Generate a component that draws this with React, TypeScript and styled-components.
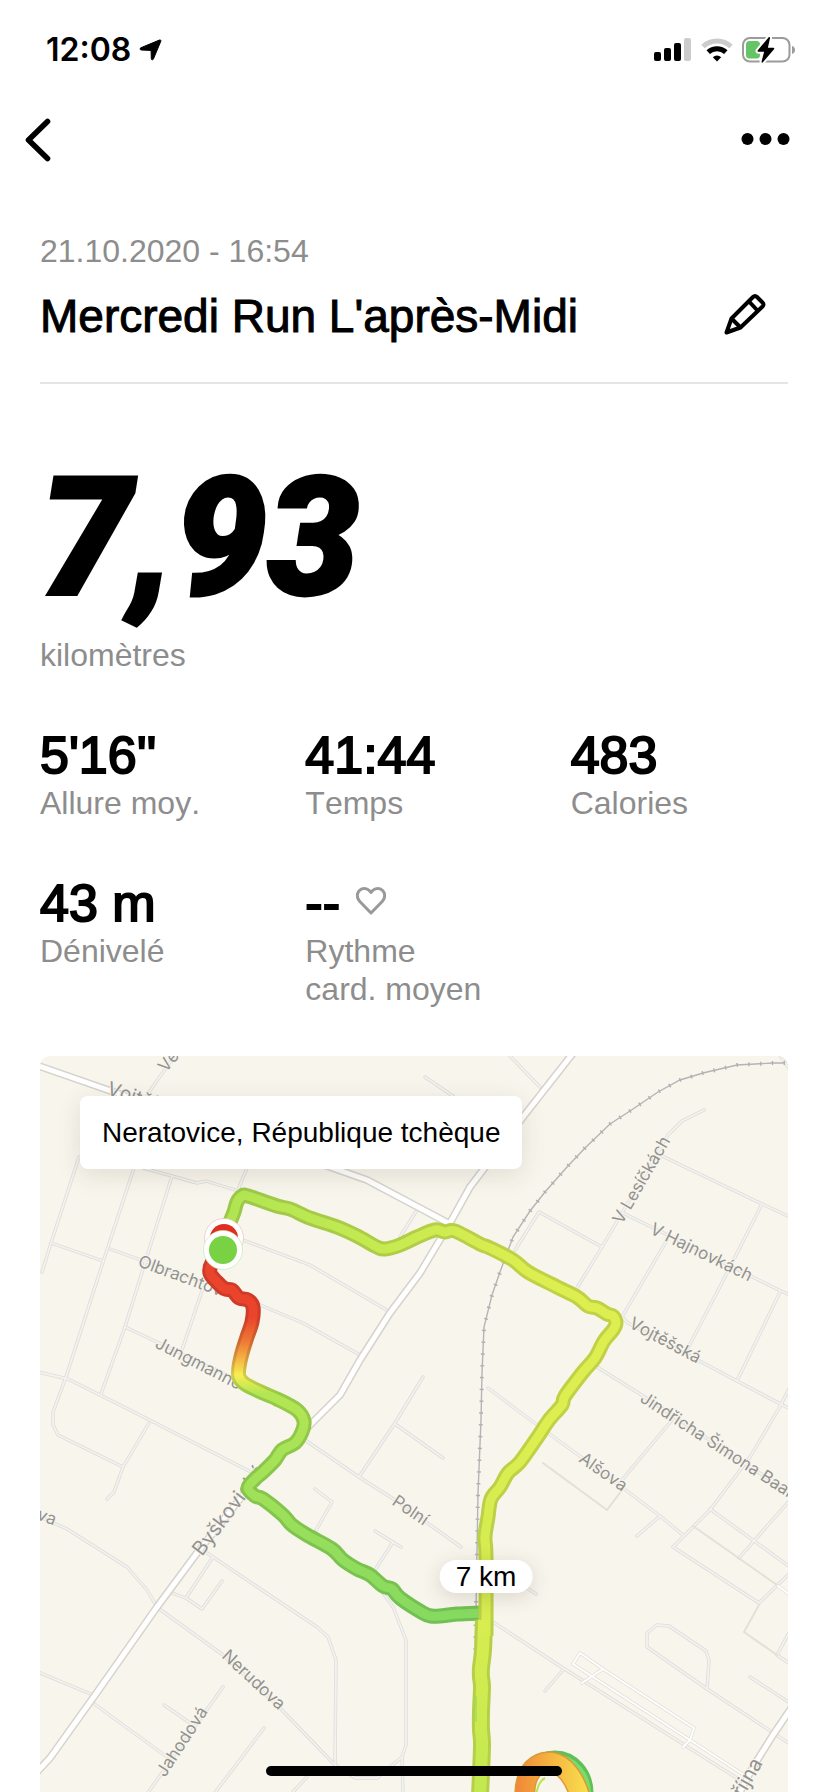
import React from "react";
import styled, { createGlobalStyle } from "styled-components";

const GlobalStyle = createGlobalStyle`
  * { box-sizing: border-box; }
  body { margin: 0; background: #fff; color: #000; font-family: "Liberation Sans", Arial, sans-serif; font-kerning: none; }
  h1, p, dl, dt, dd { margin: 0; font-weight: 400; }
`;

const muted = "#8d8d8d";

const Screen = styled.div`
  display: flex;
  flex-direction: column;
  min-height: 100vh;
`;

const StatusBar = styled.header`
  display: flex;
  align-items: center;
  justify-content: space-between;
  height: 100px;
  padding: 0 32px 0 46px;
`;

const Cluster = styled.div<{ $gap: number }>`
  display: flex;
  align-items: center;
  gap: ${(p) => p.$gap}px;
`;

const Clock = styled.time`
  font: 600 32px/40px Inter, sans-serif;
`;

const NavBar = styled.nav`
  display: flex;
  align-items: center;
  justify-content: space-between;
  height: 80px;
  padding: 0 38px 0 20px;
`;

const IconButton = styled.button`
  display: flex;
  padding: 0;
  border: 0;
  background: none;
  color: inherit;
  cursor: pointer;
`;

const Content = styled.main`
  display: flex;
  flex: 1;
  flex-direction: column;
  padding: 52px 40px 0;
`;

const RunHeader = styled.div`
  display: flex;
  flex-direction: column;
  gap: 20px;
  padding-bottom: 40px;
  border-bottom: 2px solid #e5e5e5;
`;

const Caption = styled.p`
  color: ${muted};
  font-size: 32px;
  line-height: 38px;
`;

const TitleRow = styled.div`
  display: flex;
  align-items: center;
  justify-content: space-between;
  padding-right: 22px;
`;

const Title = styled.h1`
  font-size: 46px;
  line-height: 52px;
  -webkit-text-stroke: 1px #000;
`;

const Distance = styled.section`
  display: flex;
  flex-direction: column;
  gap: 18px;
  padding: 74px 0 52px;
`;

const DistanceValue = styled.p`
  font: italic 900 164px/160px Roboto, sans-serif;
  -webkit-text-stroke: 3px #000;
`;

const Stats = styled.dl`
  display: grid;
  grid-template-columns: repeat(3, 1fr);
  gap: 52px 48px;
`;

const Stat = styled.div`
  display: flex;
  flex-direction: column-reverse;
  justify-content: flex-end;
`;

const StatLabel = styled.dt`
  color: ${muted};
  font-size: 32px;
  line-height: 38px;
`;

const StatValue = styled.dd`
  display: flex;
  align-items: center;
  gap: 16px;
  font-size: 52px;
  line-height: 58px;
  -webkit-text-stroke: 2px #000;
`;

const MapCard = styled.section`
  position: relative;
  flex: 1;
  min-height: 736px;
  margin-top: 48px;
  overflow: hidden;
  border-radius: 10px 10px 0 0;
  background: #f8f5ed;
`;

const MapDrawing = styled.svg`
  position: absolute;
  inset: 0;
  width: 100%;
  height: 100%;
  font-family: Inter, sans-serif;
`;

const PlaceTag = styled.div`
  position: absolute;
  top: 40px;
  left: 40px;
  padding: 18px 22px;
  border-radius: 8px;
  background: #fff;
  box-shadow: 0 6px 24px rgba(60, 50, 20, 0.12);
  font-size: 28px;
  line-height: 37px;
`;

const DistancePin = styled.div`
  position: absolute;
  top: 504px;
  left: 446px;
  transform: translateX(-50%);
  padding: 0 16px;
  border-radius: 17px;
  background: #fff;
  box-shadow: 0 4px 20px rgba(60, 50, 20, 0.16);
  font-size: 28px;
  line-height: 33px;
  white-space: nowrap;
`;

const HomeIndicator = styled.div`
  position: fixed;
  bottom: 16px;
  left: 50%;
  width: 296px;
  height: 10px;
  transform: translateX(-50%);
  border-radius: 5px;
  background: #000;
`;

type Point = [number, number];

const mainRoads = [
  "M-4 9 L68 34 L293 112 L327 124 L408 167",
  "M534 -4 L483 61 L443 114 L430 131 L410 167 L380 217 L350 257 L320 304 L300 339 L273 366 L207 434 L157 497 L117 551 L53 642 L10 702 L-4 717",
  "M752 651 L733 679 L713 711 L698 740",
];

const streets = [
  "M136 -2 L107 39",
  "M103 112 L132 120 L157 127 L166 125 L205 137",
  "M39 101 L11 187 L2 216",
  "M94 112 L63 206 L26 321 L13 356 L13 369 L18 379 L83 411",
  "M132 120 L85 271 L61 338",
  "M11 187 L63 205",
  "M70 193 L163 226",
  "M203 184 L270 209 L350 256",
  "M220 249 L263 267 L320 299",
  "M163 232 L142 294",
  "M85 271 L200 325",
  "M-2 316 L28 323 L90 354 L213 417",
  "M207 112 L197 136",
  "M377 154 L360 181",
  "M383 321 L355 367 L319 421",
  "M265 384 L319 421 L355 444 L421 491",
  "M355 368 L403 402",
  "M109 367 L83 411 L74 436 L67 443",
  "M275 433 L292 446 L275 476",
  "M335 475 L361 491",
  "M353 486 L335 514",
  "M-2 460 L27 473 L87 511 L107 534 L117 551",
  "M167 497 L277 571 L288 581 L296 604 L295 709",
  "M173 501 L146 542",
  "M132 537 L146 542 L162 553 L182 525",
  "M118 552 L183 599 L240 652 L295 709 L315 722 L337 722 L362 701 L366 689 L366 584 L353 551 L343 537",
  "M362 701 L363 738",
  "M-2 616 L53 639",
  "M53 647 L127 701",
  "M183 631 L107 738",
  "M124 649 L150 667",
  "M224 672 L174 738",
  "M267 721 L251 738",
  "M487 532 L496 538",
  "M468 -2 L500 31",
  "M385 21 L413 40",
  "M739 -2 L750 14",
  "M664 54 L642 65 L628 79 L582 157 L562 191 L537 232",
  "M620 99 L722 148 L750 161",
  "M583 157 L741 235 L750 239",
  "M475 194 L499 156 L562 191",
  "M627 184 L582 261 L588 267 L697 325 L750 353",
  "M722 148 L687 217 L648 292",
  "M740 236 L697 325",
  "M557 311 L600 338 L750 437",
  "M750 331 L738 354 L710 401 L670 454 L633 491 L719 547 L750 517",
  "M448 332 L477 354 L583 432 L620 460 L643 479",
  "M620 460 L597 480",
  "M632 364 L582 424",
  "M670 453 L750 511",
  "M750 444 L699 502",
  "M750 575 L737 599 L750 608",
  "M453 566 L523 612 L703 726",
  "M523 614 L505 635",
  "M750 688 L667 633 L669 604 L666 595 L629 570 L617 569 L607 577 L607 591 L667 633",
  "M710 621 L750 647",
];

const footpaths = [
  "M503 407 L567 454 L582 434",
  "M653 470 L737 529",
  "M719 549 L704 576 L737 599",
];

const serviceLanes = [
  "M533 608 L540 597 L563 613 L654 672 L650 684 L643 691",
  "M563 613 L542 627",
  "M533 608 L707 721",
  "M738 530 L750 539",
];

const railway =
  "M745 7 L733 7 L697 9 L663 17 L640 24 L618 36 L590 55 L570 68 L545 92 L527 111 L505 136 L490 155 L473 181 L460 216 L452 239 L444 271 L442 317 L441 364 L438 437 L436 554 L435 600";

const streetLabels: { name: string; x: number; y: number; angle: number; size?: number }[] = [
  { name: "Ve", x: 126, y: 17, angle: -50 },
  { name: "Vojtěšská", x: 66, y: 38, angle: 18, size: 19 },
  { name: "Olbrachtov", x: 97, y: 210, angle: 20 },
  { name: "Jungmanno", x: 114, y: 291, angle: 27 },
  { name: "V Lesíčkách", x: 582, y: 169, angle: -60 },
  { name: "V Hajnovkách", x: 609, y: 177, angle: 26 },
  { name: "Vojtěšská", x: 588, y: 271, angle: 28 },
  { name: "Jindřicha Šimona Baara", x: 599, y: 345, angle: 33 },
  { name: "Alšova", x: 538, y: 405, angle: 35 },
  { name: "Polní", x: 351, y: 448, angle: 34 },
  { name: "va", x: -4, y: 463, angle: 20 },
  { name: "Byškovická", x: 162, y: 501, angle: -53, size: 20 },
  { name: "Nerudova", x: 181, y: 601, angle: 43 },
  { name: "Jahodová", x: 125, y: 722, angle: -57 },
  { name: "října", x: 703, y: 742, angle: -60, size: 20 },
];

const routeStart: Point[] = [
  [185, 190], [172, 207], [170, 217], [177, 226], [185, 233], [192, 234], [199, 242], [208, 244], [213, 251],
  [212, 266], [207, 281], [202, 297], [199, 311], [199, 321], [205, 328], [223, 337], [237, 343], [257, 354],
  [264, 365], [262, 376], [255, 387], [242, 394], [235, 404], [223, 416], [215, 423], [208, 432], [215, 440],
  [223, 443], [243, 459], [252, 469], [267, 479], [292, 493], [303, 504], [317, 513], [330, 519], [343, 530],
  [352, 533], [360, 542], [383, 557], [391, 560], [400, 560], [417, 558], [441, 557],
];

const routeEnd: Point[] = [
  [190, 166], [194, 156], [197, 146], [202, 140], [208, 140], [237, 150], [250, 153], [270, 162], [297, 171],
  [317, 180], [337, 191], [345, 193], [360, 189], [377, 181], [395, 174], [405, 176], [415, 175], [440, 188],
  [450, 192], [473, 204], [488, 216], [517, 231], [537, 241], [548, 250], [557, 252], [567, 258], [573, 260],
  [576, 267], [573, 274], [564, 285], [555, 302], [543, 316], [525, 340], [522, 349], [509, 364], [497, 382],
  [480, 406], [468, 417], [460, 431], [451, 443], [448, 461], [445, 481], [446, 501], [446, 580],
];

const routeShared: Point[] = [
  [444, 564], [443, 594], [441, 612], [441, 621], [442, 631], [441, 656], [441, 674], [442, 690], [440, 740],
];

/* Catmull-Rom curve through the recorded positions */
function smoothPath(points: Point[]) {
  let d = `M${points[0][0]} ${points[0][1]}`;
  for (let i = 0; i < points.length - 1; i++) {
    const a = points[Math.max(i - 1, 0)];
    const b = points[i];
    const c = points[i + 1];
    const e = points[Math.min(i + 2, points.length - 1)];
    d += ` C${b[0] + (c[0] - a[0]) / 6} ${b[1] + (c[1] - a[1]) / 6} ${c[0] - (e[0] - b[0]) / 6} ${c[1] - (e[1] - b[1]) / 6} ${c[0]} ${c[1]}`;
  }
  return d;
}

const startPath = smoothPath(routeStart);
const endPath = smoothPath(routeEnd);
const sharedPath = smoothPath(routeShared);
const loopPath = "M485 744 C483 712 500 705 511 706 C525 708 536 724 541 744";

function RunMap() {
  return (
    <MapDrawing viewBox="0 0 748 736" preserveAspectRatio="xMinYMin slice" role="img" aria-label="Parcours de la course">
      <defs>
        <linearGradient id="start" gradientUnits="userSpaceOnUse" x1="0" y1="262" x2="0" y2="562">
          <stop offset="0" stopColor="#ea452c" />
          <stop offset="0.08" stopColor="#ee7b36" />
          <stop offset="0.14" stopColor="#f4b845" />
          <stop offset="0.19" stopColor="#f8ee52" />
          <stop offset="0.25" stopColor="#b4e653" />
          <stop offset="1" stopColor="#86da60" />
        </linearGradient>
        <linearGradient id="startEdge" gradientUnits="userSpaceOnUse" x1="0" y1="262" x2="0" y2="562">
          <stop offset="0" stopColor="#cf3b28" />
          <stop offset="0.08" stopColor="#d0692f" />
          <stop offset="0.14" stopColor="#d59d3c" />
          <stop offset="0.19" stopColor="#d3cd48" />
          <stop offset="0.25" stopColor="#97c947" />
          <stop offset="1" stopColor="#71c053" />
        </linearGradient>
        <linearGradient id="end" gradientUnits="userSpaceOnUse" x1="190" y1="0" x2="490" y2="0">
          <stop offset="0" stopColor="#b0e552" />
          <stop offset="1" stopColor="#dcee50" />
        </linearGradient>
        <linearGradient id="endEdge" gradientUnits="userSpaceOnUse" x1="190" y1="0" x2="490" y2="0">
          <stop offset="0" stopColor="#9bc848" />
          <stop offset="1" stopColor="#c0d146" />
        </linearGradient>
        <linearGradient id="shared" gradientUnits="userSpaceOnUse" x1="0" y1="564" x2="0" y2="736">
          <stop offset="0" stopColor="#d8ed50" />
          <stop offset="1" stopColor="#c2e951" />
        </linearGradient>
        <linearGradient id="loop" gradientUnits="userSpaceOnUse" x1="478" y1="0" x2="546" y2="0">
          <stop offset="0" stopColor="#f08a38" />
          <stop offset="0.5" stopColor="#f5b640" />
          <stop offset="1" stopColor="#f8dc4e" />
        </linearGradient>
      </defs>

      <g fill="none" strokeLinejoin="round" strokeLinecap="round">
        <g stroke="#dcdcda" strokeWidth="3.4">{streets.map((d) => <path key={d} d={d} />)}</g>
        <g stroke="#f3f2ee" strokeWidth="1.8">{streets.map((d) => <path key={d} d={d} />)}</g>
        <g stroke="#e3e1d5" strokeWidth="2">{footpaths.map((d) => <path key={d} d={d} />)}</g>
        <g stroke="#e2e0da" strokeWidth="3.4">{serviceLanes.map((d) => <path key={d} d={d} />)}</g>
        <g stroke="#fff" strokeWidth="2">{serviceLanes.map((d) => <path key={d} d={d} />)}</g>
        <g stroke="#d6d3cc" strokeWidth="8">{mainRoads.map((d) => <path key={d} d={d} />)}</g>
        <g stroke="#fff" strokeWidth="5">{mainRoads.map((d) => <path key={d} d={d} />)}</g>
      </g>
      <path d={railway} fill="none" stroke="#b4b4b4" strokeWidth="1.4" />
      <path d={railway} fill="none" stroke="#b0b0b2" strokeWidth="4" strokeDasharray="1.4 10.4" />

      <g fill="#92928f" stroke="#f8f5ed" strokeWidth="2" paintOrder="stroke">
        {streetLabels.map((l) => (
          <text key={`${l.name}${l.x}`} fontSize={l.size ?? 17} transform={`translate(${l.x} ${l.y}) rotate(${l.angle})`}>
            {l.name}
          </text>
        ))}
      </g>

      <g fill="none" strokeLinejoin="round">
        <path d={startPath} stroke="url(#startEdge)" strokeWidth="15" />
        <path d={startPath} stroke="url(#start)" strokeWidth="9" />
        <path d={endPath} stroke="url(#endEdge)" strokeWidth="15" />
        <path d={sharedPath} stroke="#b6cf49" strokeWidth="18" />
        <path d={endPath} stroke="url(#end)" strokeWidth="9" />
        <path d={sharedPath} stroke="url(#shared)" strokeWidth="12" />
        <path d="M436 640 L436 666" stroke="#8bd95b" />
      </g>

      <g fill="none">
        <ellipse cx="515" cy="737" rx="31" ry="35" stroke="#5fbf58" strokeWidth="15" />
        <ellipse cx="514" cy="738" rx="31" ry="34" stroke="#7cdc69" strokeWidth="12" />
        <path d={loopPath} stroke="#dc9838" strokeWidth="21" />
        <path d={loopPath} stroke="url(#loop)" strokeWidth="18" />
        <path d="M496 742 Q497 726 505 722" stroke="#b8e552" strokeWidth="2" />
      </g>

      <circle cx="184" cy="182" r="19.5" fill="#fff" stroke="#efb5ae" strokeWidth="0.6" />
      <circle cx="184" cy="182" r="14" fill="#e02f20" />
      <circle cx="183" cy="194" r="19.5" fill="#fff" stroke="#bfe8a8" strokeWidth="0.6" />
      <circle cx="183" cy="194" r="14" fill="#78d244" />
    </MapDrawing>
  );
}

const ArrowIcon = () => (
  <svg width="23" height="22" viewBox="0 0 23 22" stroke="#000" strokeLinejoin="round" aria-hidden="true">
    <path d="M20.500 1C21.500 .7 22.200 1.300 21.800 2.300L14.400 20C13.900 21.200 12.300 21 12.300 19.700L12.100 11.400L2.300 11C.8 10.900 .6 9.300 2 8.700Z" />
  </svg>
);

const SignalIcon = () => (
  <svg width="38" height="24" viewBox="0 0 38 24" aria-hidden="true">
    <rect x="0" y="14" width="7" height="9" rx="2" />
    <rect x="10" y="10" width="7" height="13" rx="2" />
    <rect x="20" y="5" width="7" height="18" rx="2" />
    <rect x="30" y="0" width="7" height="23" rx="2" fill="#ccc" />
  </svg>
);

const WifiIcon = () => (
  <svg width="32" height="24" viewBox="0 0 32 24" fill="none" aria-hidden="true">
    <path d="M2 8.500a20.500 20.500 0 0 1 28 0" stroke="#ccc" strokeWidth="5" />
    <path d="M7.200 14.200a13 13 0 0 1 17.600 0" stroke="#000" strokeWidth="5" />
    <path d="M11.800 19.200a6.200 6.200 0 0 1 8.400 0L16 23.500Z" fill="#000" />
  </svg>
);

const BatteryIcon = () => (
  <svg width="54" height="28" viewBox="0 0 54 28" aria-hidden="true">
    <rect x="1" y="2" width="46.500" height="23.500" rx="7" fill="none" stroke="#9b9b9b" strokeWidth="2" />
    <rect x="4" y="5" width="14" height="17.500" rx="3.500" fill="#65c466" />
    <path d="M50 10v8c2-.6 3-2.200 3-4s-1-3.400-3-4Z" fill="#9b9b9b" />
    <path
      d="M26.500 1.500L15.800 14.200c-.6.8-.2 1.500.6 1.500h5.700l-2.500 9.800c-.3 1.200.6 1.500 1.300.7L32 13.300c.6-.8.2-1.500-.6-1.500h-5.500L28 2.200c.3-1.200-.7-1.600-1.500-.7Z"
      stroke="#fff"
      strokeWidth="4"
      paintOrder="stroke"
    />
  </svg>
);

const BackIcon = () => (
  <svg width="36" height="44" viewBox="0 0 36 44" fill="none" stroke="#000" strokeWidth="5.600" strokeLinecap="round" strokeLinejoin="round" aria-hidden="true">
    <path d="M27.500 3.500L8.500 22L27.500 40.500" />
  </svg>
);

const MoreIcon = () => (
  <svg width="54" height="24" viewBox="0 0 54 24" aria-hidden="true">
    <circle cx="11.500" cy="11" r="6" />
    <circle cx="29.500" cy="11" r="6" />
    <circle cx="47.500" cy="11" r="6" />
  </svg>
);

const PencilIcon = () => (
  <svg width="42" height="44" viewBox="0 0 42 44" fill="none" stroke="#000" strokeWidth="4" strokeLinejoin="round" aria-hidden="true">
    <path d="M2.500 38.500L7.500 24.500L29 3Q31 1 33 3L38.500 8.500Q40.500 10.500 38.500 12.500L16.500 33.500Z" />
    <path d="M25 7.500L33.500 16.500" />
    <path d="M7.500 24.500L16.500 33.500" />
  </svg>
);

const HeartIcon = () => (
  <svg width="30" height="34" viewBox="0 0 30 34" fill="none" stroke="#999" strokeWidth="3" strokeLinejoin="round" aria-label="Fréquence cardiaque">
    <path d="M15 27L3.800 15.500C.4 12 .6 7 3.600 4.300C7 1.400 12 2 15 6.500C18 2 23 1.400 26.400 4.300C29.400 7 29.600 12 26.200 15.500Z" />
  </svg>
);

const stats: { value: string; label: React.ReactNode; heart?: boolean }[] = [
  { value: "5'16''", label: "Allure moy." },
  { value: "41:44", label: "Temps" },
  { value: "483", label: "Calories" },
  { value: "43 m", label: "Dénivelé" },
  { value: "--", label: <>Rythme<br />card. moyen</>, heart: true },
];

export default function App() {
  return (
    <Screen>
      <GlobalStyle />
      <StatusBar>
        <Cluster $gap={8}>
          <Clock>12:08</Clock>
          <ArrowIcon />
        </Cluster>
        <Cluster $gap={9}>
          <SignalIcon />
          <WifiIcon />
          <BatteryIcon />
        </Cluster>
      </StatusBar>
      <NavBar>
        <IconButton type="button" aria-label="Retour">
          <BackIcon />
        </IconButton>
        <IconButton type="button" aria-label="Plus d'options">
          <MoreIcon />
        </IconButton>
      </NavBar>
      <Content>
        <RunHeader>
          <Caption>21.10.2020 - 16:54</Caption>
          <TitleRow>
            <Title>Mercredi Run L'après-Midi</Title>
            <IconButton type="button" aria-label="Modifier le titre">
              <PencilIcon />
            </IconButton>
          </TitleRow>
        </RunHeader>
        <Distance>
          <DistanceValue>7,93</DistanceValue>
          <Caption>kilomètres</Caption>
        </Distance>
        <Stats>
          {stats.map((s, i) => (
            <Stat key={i}>
              <StatLabel>{s.label}</StatLabel>
              <StatValue>
                {s.value}
                {s.heart && <HeartIcon />}
              </StatValue>
            </Stat>
          ))}
        </Stats>
        <MapCard>
          <RunMap />
          <PlaceTag>Neratovice, République tchèque</PlaceTag>
          <DistancePin>7 km</DistancePin>
        </MapCard>
      </Content>
      <HomeIndicator />
    </Screen>
  );
}
